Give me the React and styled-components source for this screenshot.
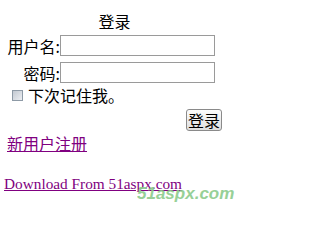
import React from "react";
import styled, { createGlobalStyle } from "styled-components";

const GlobalStyle = createGlobalStyle`
  body {
    margin: 0;
    background: #ffffff;
    font-family: "Liberation Serif", "Noto Sans CJK SC", serif;
    font-size: 16px;
    color: #000000;
  }
`;

const cjk = `"Noto Sans CJK SC", "Liberation Sans", sans-serif`;

const Page = styled.div`
  position: relative;
  width: 247px;
  height: 222px;
  overflow: hidden;
`;

const LoginForm = styled.form`
  margin: 0 0 0 7px;
  padding-top: 11px;
  width: 215px;
  display: flex;
  flex-direction: column;
`;

const Title = styled.div`
  font-family: ${cjk};
  font-size: 16px;
  line-height: 20px;
  height: 20px;
  text-align: center;
`;

const Row = styled.div`
  display: flex;
  align-items: center;
  margin-top: ${(p) => p.$top || 0}px;
`;

const Label = styled.label`
  width: 53px;
  text-align: right;
  font-family: ${cjk};
  font-size: 16px;
  line-height: 20px;
  white-space: nowrap;
`;

const TextInput = styled.input`
  box-sizing: border-box;
  width: 155px;
  height: 21px;
  margin: 0;
  border: 1px solid #9a9a9a;
  background: #ffffff;
  padding: 0 2px;
`;

const Remember = styled.label`
  display: flex;
  align-items: center;
  height: 20px;
  margin-top: 2px;
  padding-left: 5px;
  font-family: ${cjk};
  font-size: 16px;
  line-height: 20px;
`;

const Check = styled.input`
  appearance: none;
  box-sizing: border-box;
  width: 11px;
  height: 11px;
  margin: 1px 5px 0 0;
  border: 1px solid #8e9aa6;
  background: linear-gradient(135deg, #c3c9d1, #eceef2);
`;

const ButtonRow = styled.div`
  display: flex;
  justify-content: flex-end;
  margin-top: 4px;
`;

const Submit = styled.button`
  box-sizing: border-box;
  width: 36px;
  height: 22px;
  margin: 0;
  padding: 0;
  font-family: ${cjk};
  font-size: 16px;
  line-height: 18px;
  color: #000000;
  border: 1px solid #8a8a8a;
  border-radius: 3px;
  background: linear-gradient(#fcfcfc, #dedede);
`;

const Link = styled.a`
  display: block;
  color: #800080;
  text-decoration: underline;
  margin-left: ${(p) => p.$left}px;
  margin-top: ${(p) => p.$top}px;
  font-family: ${(p) => (p.$cjk ? cjk : `"Liberation Serif", serif`)};
  font-size: ${(p) => (p.$cjk ? 16 : 15.3)}px;
  line-height: ${(p) => (p.$cjk ? 20 : 18)}px;
`;

const Watermark = styled.div`
  position: absolute;
  left: 137px;
  top: 184px;
  font-family: "Liberation Sans", Arial, sans-serif;
  font-weight: bold;
  font-style: italic;
  font-size: 17px;
  line-height: 20px;
  color: #8ccc8c;
  opacity: 0.9;
  pointer-events: none;
`;

export default function App() {
  return (
    <Page>
      <GlobalStyle />
      <LoginForm onSubmit={(e) => e.preventDefault()}>
        <Title>登录</Title>
        <Row $top={4}>
          <Label>用户名:</Label>
          <TextInput type="text" />
        </Row>
        <Row $top={6}>
          <Label>密码:</Label>
          <TextInput type="password" />
        </Row>
        <Remember>
          <Check type="checkbox" />
          下次记住我。
        </Remember>
        <ButtonRow>
          <Submit type="submit">登录</Submit>
        </ButtonRow>
      </LoginForm>
      <Link href="#" $cjk $left={7} $top={2}>
        新用户注册
      </Link>
      <Link href="#" $left={4} $top={22}>
        Download From 51aspx.com
      </Link>
      <Watermark>51aspx.com</Watermark>
    </Page>
  );
}
